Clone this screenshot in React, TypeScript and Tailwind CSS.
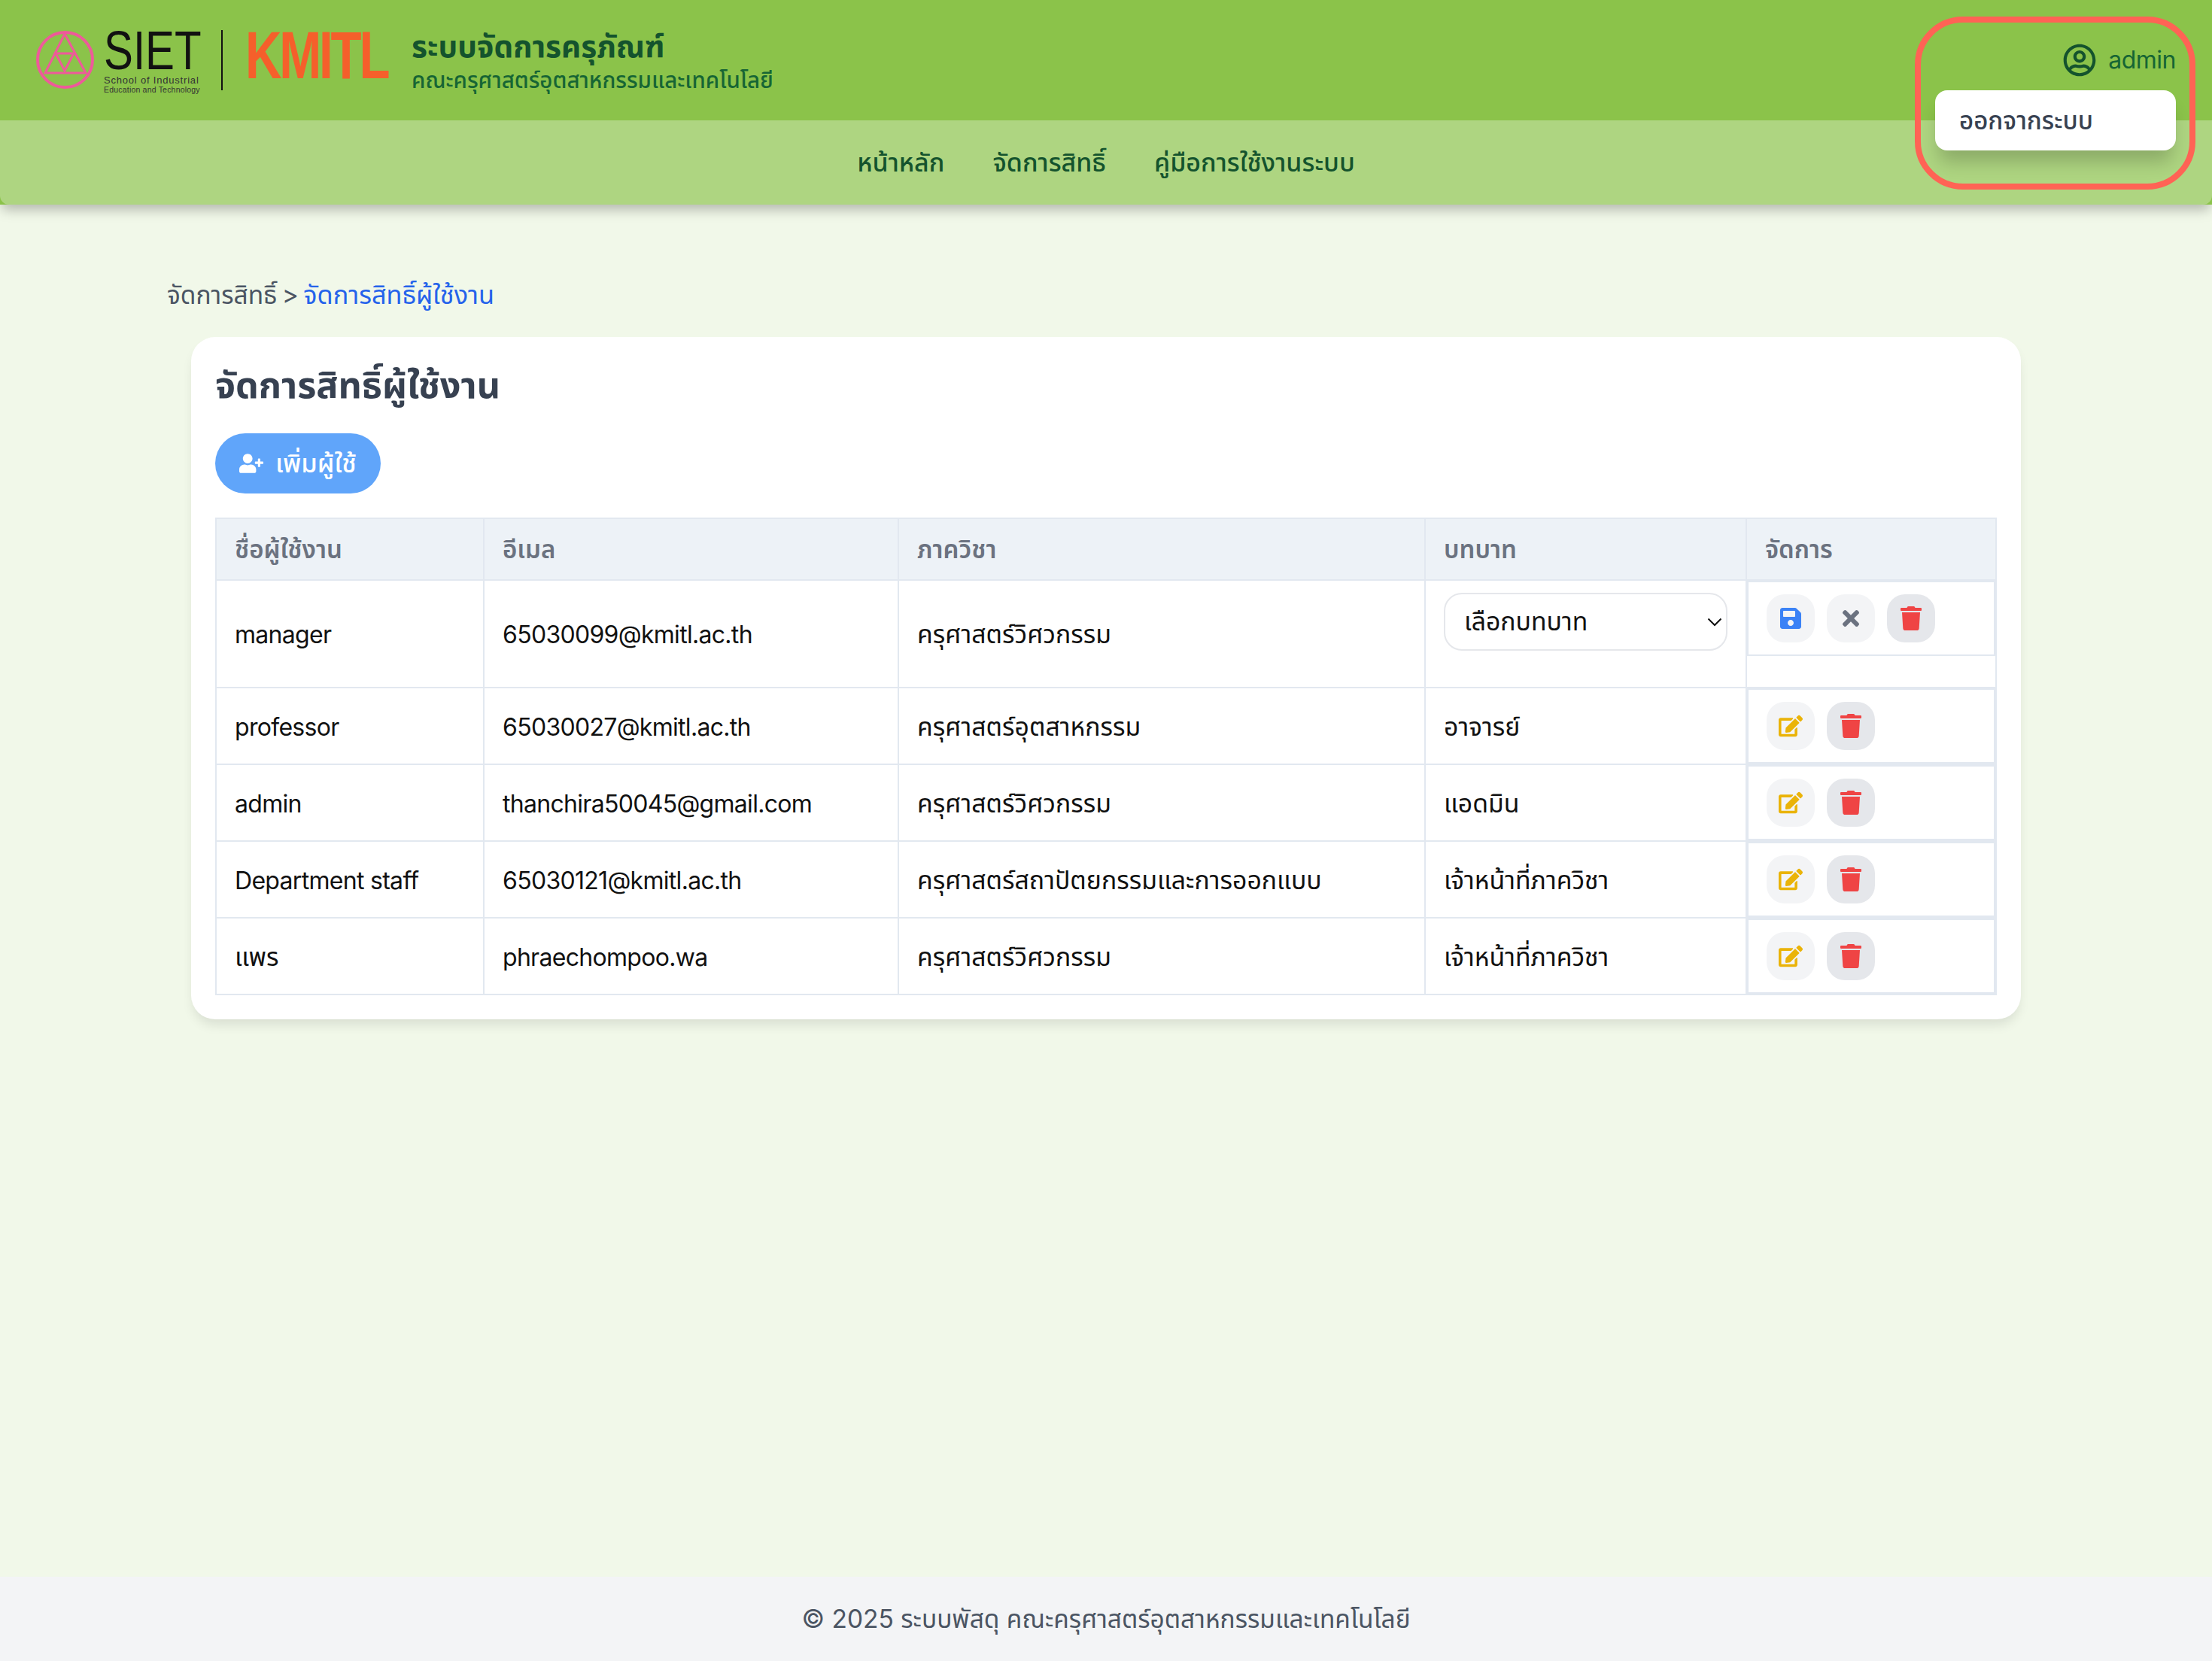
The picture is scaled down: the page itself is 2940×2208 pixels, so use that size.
import { FaEdit, FaRegUserCircle, FaSave, FaTimes, FaTrash, FaUserPlus } from 'react-icons/fa';

const users = [
  { name: 'professor', email: '65030027@kmitl.ac.th', dept: 'ครุศาสตร์อุตสาหกรรม', role: 'อาจารย์' },
  { name: 'admin', email: 'thanchira50045@gmail.com', dept: 'ครุศาสตร์วิศวกรรม', role: 'แอดมิน' },
  { name: 'Department staff', email: '65030121@kmitl.ac.th', dept: 'ครุศาสตร์สถาปัตยกรรมและการออกแบบ', role: 'เจ้าหน้าที่ภาควิชา' },
  { name: 'แพร', email: 'phraechompoo.wa', dept: 'ครุศาสตร์วิศวกรรม', role: 'เจ้าหน้าที่ภาควิชา' },
];

const Logo = () => (
  <div className="flex items-start">
    <svg width="80" height="80" viewBox="0 0 80 80" className="mt-[1px]">
      <circle cx="38.5" cy="38.5" r="36.5" fill="none" stroke="#ee5a9a" strokeWidth="4" />
      <path d="M38 4 L66 56 H12 Z M26 30 H50 L38 53 Z" fill="none" stroke="#ee5a9a" strokeWidth="3" />
    </svg>
    <div className="ml-[10px] flex w-[130px] flex-col font-['Liberation_Sans',sans-serif] text-[#111]">
      <span className="origin-top-left scale-x-[0.81] text-[72px] leading-[54px] whitespace-nowrap">SIET</span>
      <span className="mt-[6px] text-[13px] leading-[13px] tracking-[0.8px] whitespace-nowrap text-[#333]">School of Industrial</span>
      <span className="text-[10.5px] leading-[12px] tracking-[0.2px] whitespace-nowrap text-[#333]">Education and Technology</span>
    </div>
    <div className="mr-[30px] ml-[26px] h-[80px] w-[2px] bg-[#111]" />
    <span className="w-[191px] origin-top-left scale-x-[0.8] scale-y-[1.06] font-['Liberation_Sans',sans-serif] text-[84px] leading-[62px] font-bold tracking-[-4px] text-[#f55f2b]">
      KMITL
    </span>
  </div>
);

const ActionCell = ({ editing = false }: { editing?: boolean }) => (
  <td className="border-2 border-[#e2e8f0] p-0 align-top">
    <div className="flex gap-4 border-2 border-[#e2e8f0] px-6 py-4">
      <button className="flex h-16 w-16 items-center justify-center rounded-3xl bg-[#f3f4f6]">
        {editing ? <FaSave size={32} className="text-[#3b82f6]" /> : <FaEdit size={32} className="text-[#eab308]" />}
      </button>
      {editing && (
        <button className="flex h-16 w-16 items-center justify-center rounded-3xl bg-[#f3f4f6]">
          <FaTimes size={32} className="text-[#6b7280]" />
        </button>
      )}
      <button className="flex h-16 w-16 items-center justify-center rounded-3xl bg-[#e5e7eb]">
        <FaTrash size={32} className="text-[#ef4444]" />
      </button>
    </div>
  </td>
);

const App = () => {
  const th = 'border-2 border-[#e2e8f0] px-6 pt-[2px] text-left text-[33px] font-semibold text-[#6b7280]';
  const td = 'border-2 border-[#e2e8f0] px-6 pt-[3px] text-[32px] tracking-[-0.7px] text-[#111]';
  const tdThai = 'border-2 border-[#e2e8f0] px-6 pt-[2px] text-[33.8px] text-[#111]';

  return (
    <div className="flex min-h-screen flex-col bg-[#f1f8e9] font-['Inter','Noto_Sans_Thai','Noto_Sans',sans-serif]">
      <header className="relative bg-[#8bc34a] shadow-[0_10px_15px_-3px_rgba(0,0,0,0.25)]">
        <div className="flex h-40 items-start px-12 pt-10">
          <Logo />
          <div className="ml-[30px] flex flex-col">
            <span className="text-[40.5px] leading-[44px] font-bold text-[#14532d]">ระบบจัดการครุภัณฑ์</span>
            <span className="mt-[2px] text-[29.5px] leading-[40px] font-medium text-[#166534]">คณะครุศาสตร์อุตสาหกรรมและเทคโนโลยี</span>
          </div>
          <div className="ml-auto flex items-center gap-4 pt-[18px] text-[32px] tracking-[-0.5px] text-[#166534]">
            <FaRegUserCircle size={44} className="text-[#14532d]" />
            <span className="leading-[44px]">admin</span>
          </div>
        </div>
        <nav className="flex h-[112px] items-center justify-center gap-16 rounded-b-xl bg-[#aed581] pb-[2px] text-[34px] font-medium text-[#14532d]">
          <a>หน้าหลัก</a>
          <a>จัดการสิทธิ์</a>
          <a>คู่มือการใช้งานระบบ</a>
        </nav>
        {/* logout dropdown */}
        <div className="absolute top-[120px] right-12 flex h-20 w-80 items-center rounded-2xl bg-white pt-[2px] pl-8 text-[33px] font-medium text-[#374151] shadow-[0_20px_25px_-5px_rgba(0,0,0,0.2)]">
          ออกจากระบบ
        </div>
        {/* red highlight round the user menu */}
        <div className="absolute top-[22px] right-[22px] h-[230px] w-[373px] rounded-[64px] border-8 border-[#ff6355]" />
      </header>

      <main className="flex-1 px-[222px] pt-[96px]">
        <div className="text-[33.5px] leading-[48px] [word-spacing:-3px] text-[#4b5563]">
          จัดการสิทธิ์ &gt; <span className="text-[34.3px] text-[#2563eb]">จัดการสิทธิ์ผู้ใช้งาน</span>
        </div>
        <div className="mx-8 mt-[32px] rounded-[32px] bg-white p-8 shadow-[0_10px_15px_-3px_rgba(0,0,0,0.1)]">
          <h1 className="text-[48.5px] leading-[64px] font-bold text-[#374151]">จัดการสิทธิ์ผู้ใช้งาน</h1>
          <button className="mt-[32px] flex h-20 items-center gap-4 rounded-full bg-[#60a5fa] px-8 text-[34.5px] font-medium text-white">
            <FaUserPlus size={32} />
            เพิ่มผู้ใช้
          </button>
          <table className="mt-8 w-full table-fixed border-collapse">
            <thead>
              <tr className="h-[82px] bg-[#edf2f7]">
                <th className={`${th} w-[356px]`}>ชื่อผู้ใช้งาน</th>
                <th className={`${th} w-[551px]`}>อีเมล</th>
                <th className={`${th} w-[700px]`}>ภาควิชา</th>
                <th className={`${th} w-[427px]`}>บทบาท</th>
                <th className={th}>จัดการ</th>
              </tr>
            </thead>
            <tbody>
              <tr className="h-[143px]">
                <td className={td}>manager</td>
                <td className={td}>65030099@kmitl.ac.th</td>
                <td className={tdThai}>ครุศาสตร์วิศวกรรม</td>
                <td className="border-2 border-[#e2e8f0] px-6 pt-4 align-top">
                  <div className="relative">
                    <select className="h-[77px] w-full appearance-none rounded-3xl border-2 border-[#e5e7eb] bg-white pr-12 pl-[25px] text-[33.8px] text-[#111]">
                      <option>เลือกบทบาท</option>
                    </select>
                    <svg width="20" height="12" viewBox="0 0 20 12" fill="none" stroke="#111" strokeWidth="2" className="pointer-events-none absolute top-[33px] right-[7px]">
                      <path d="M1.5 1.5 L10 10 L18.5 1.5" />
                    </svg>
                  </div>
                </td>
                <ActionCell editing />
              </tr>
              {users.map((u) => (
                <tr key={u.email} className="h-[102px]">
                  <td className={u.name === 'แพร' ? tdThai : td}>{u.name}</td>
                  <td className={td}>{u.email}</td>
                  <td className={tdThai}>{u.dept}</td>
                  <td className={tdThai}>{u.role}</td>
                  <ActionCell />
                </tr>
              ))}
            </tbody>
          </table>
        </div>
      </main>

      <footer className="flex h-[112px] items-center justify-center bg-[#f3f4f6] text-[33.5px] text-[#4b5563]">
        © 2025 ระบบพัสดุ คณะครุศาสตร์อุตสาหกรรมและเทคโนโลยี
      </footer>
    </div>
  );
};

export default App;
